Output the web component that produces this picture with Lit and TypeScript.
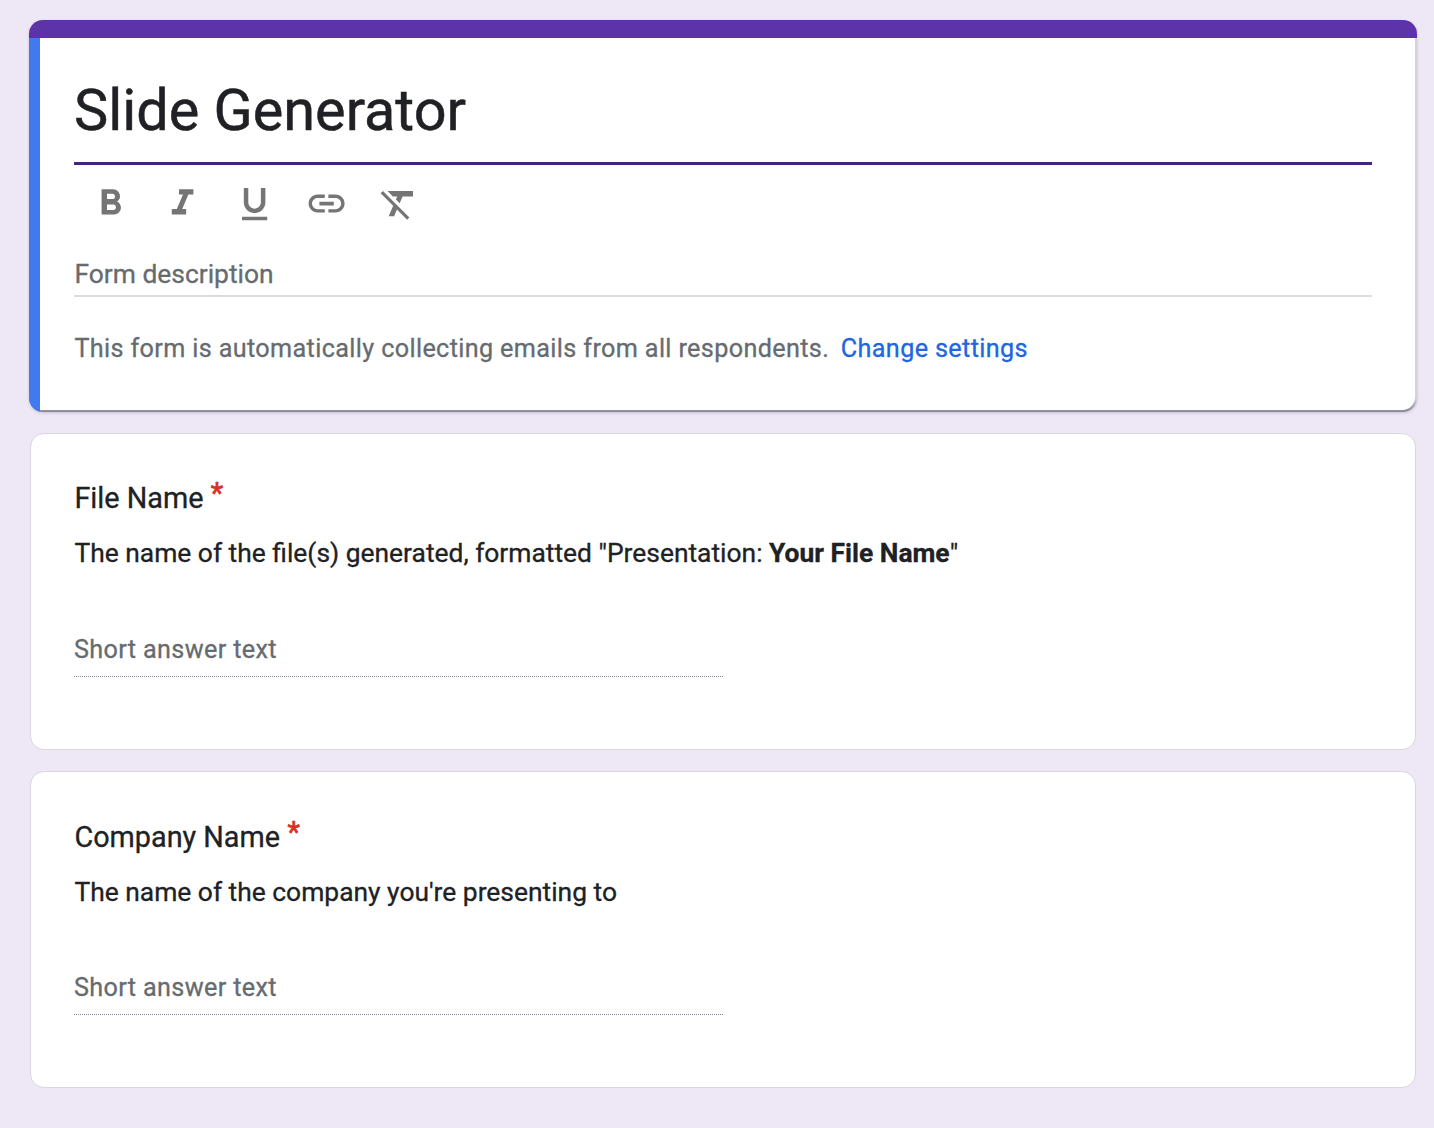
import { LitElement, html, css, svg } from "lit";
import { customElement, property } from "lit/decorators.js";

const ICONS: [string, string][] = [
  ["Bold", "M15.6 10.79c.97-.67 1.65-1.77 1.65-2.79 0-2.26-1.75-4-4-4H7v14h7.04c2.09 0 3.71-1.7 3.71-3.79 0-1.52-.86-2.82-2.15-3.42zM10 6.5h3c.83 0 1.5.67 1.5 1.5s-.67 1.5-1.5 1.5h-3v-3zm3.5 9H10v-3h3.5c.83 0 1.5.67 1.5 1.5s-.67 1.5-1.5 1.5z"],
  ["Italic", "M10 4v3h2.21l-3.42 8H6v3h8v-3h-2.21l3.42-8H18V4z"],
  ["Underline", "M12 17.3c3.31 0 6-2.69 6-6V3.3h-2.5v8c0 1.93-1.57 3.5-3.5 3.5s-3.5-1.57-3.5-3.5v-8H6v8c0 3.31 2.69 6 6 6zm-7 2v2h14v-2H5z"],
  ["Insert link", "M3.9 12c0-1.71 1.39-3.1 3.1-3.1h4V7H7c-2.76 0-5 2.24-5 5s2.24 5 5 5h4v-1.9H7c-1.71 0-3.1-1.39-3.1-3.1zM8 13h8v-2H8v2zm9-6h-4v1.9h4c1.71 0 3.1 1.39 3.1 3.1s-1.39 3.1-3.1 3.1h-4V17h4c2.76 0 5-2.24 5-5s-2.24-5-5-5z"],
  ["Remove formatting", "M3.27 5L2 6.27l6.97 6.97L6.5 19h3l1.57-3.66L16.73 21 18 19.73 3.55 5.27 3.27 5zM6 5v.18L8.82 8h2.4l-.72 1.68 2.1 2.1L14.21 8H20V5H6z"],
];

@customElement("form-header")
class FormHeader extends LitElement {
  static styles = css`
    :host {
      display: block;
    }
    .card {
      display: flex;
      flex-direction: column;
      height: 392px;
      border-radius: 14px;
      overflow: hidden;
      background: #dadce0;
    }
    .shell {
      border-radius: 14px;
      box-shadow: 0 1px 3px rgba(60, 50, 90, 0.2);
    }
    .strip {
      height: 18px;
      flex: none;
      background: #5c33a8;
    }
    .row {
      display: flex;
      flex: 1;
      background: linear-gradient(to bottom, #d5d2dc 0, #d5d2dc 360px, #8b8893 374px);
    }
    .accent {
      width: 11px;
      flex: none;
      background: #4179ee;
    }
    .body {
      flex: 1;
      min-width: 0;
      box-sizing: border-box;
      margin: 0 2px 2px 0;
      padding: 35px 43px 0 34px;
      background: #fff;
      border-bottom-right-radius: 13px;
    }
    .title {
      margin: 0;
      box-sizing: border-box;
      height: 92px;
      padding-top: 2px;
      line-height: 72px;
      font-size: 57.6px;
      font-weight: 400;
      color: #202124;
      -webkit-text-stroke: 0.5px #202124;
      border-bottom: 3px solid #42257e;
      white-space: nowrap;
    }
    .tools {
      display: flex;
      gap: 28.8px;
      padding: 17px 0 0 15px;
    }
    .icon {
      display: block;
      width: 43.2px;
      height: 43.2px;
      fill: #757575;
    }
    .desc {
      margin-top: 30px;
      height: 40px;
      line-height: 38px;
      font-size: 26.4px;
      text-indent: 0.4px;
      color: #666b70;
      -webkit-text-stroke: 0.3px #666b70;
      border-bottom: 2px solid #dadce0;
    }
    .note {
      margin-top: 33px;
      line-height: 38px;
      font-size: 25.2px;
      letter-spacing: 0.36px;
      text-indent: 0.4px;
      color: #666b70;
      -webkit-text-stroke: 0.3px #666b70;
      white-space: nowrap;
    }
    .link {
      margin-left: 5px;
      color: #2065e2;
      -webkit-text-stroke: 0.3px #2065e2;
    }
  `;
  render() {
    return html`<div class="shell"><section class="card">
      <div class="strip"></div>
      <div class="row">
        <div class="accent"></div>
        <div class="body">
          <h1 class="title">Slide Generator</h1>
          <div class="tools">
            ${ICONS.map(([name, d]) => html`<svg class="icon" viewBox="0 0 24 24" aria-label=${name}>${svg`<path d=${d}></path>`}</svg>`)}
          </div>
          <div class="desc">Form description</div>
          <div class="note">This form is automatically collecting emails from all respondents. <span class="link">Change settings</span></div>
        </div>
      </div>
    </section></div>`;
  }
}

@customElement("form-question")
class FormQuestion extends LitElement {
  static styles = css`
    :host {
      display: block;
    }
    .card {
      display: flex;
      flex-direction: column;
      box-sizing: border-box;
      height: 317px;
      padding: var(--question-inset, 43px) 43px 72px;
      background: #fff;
      border: 1px solid #d9d6e0;
      border-radius: 14px;
    }
    .name {
      display: flex;
      gap: 7px;
      line-height: 43px;
      font-size: 28.8px;
      text-indent: 0.4px;
      color: #202124;
      -webkit-text-stroke: 0.3px #202124;
    }
    .star {
      color: #d93025;
      line-height: 32px;
      -webkit-text-stroke: 0.7px #d93025;
    }
    .help {
      margin-top: 14px;
      line-height: 38px;
      font-size: 26.4px;
      text-indent: 0.4px;
      color: #202124;
      -webkit-text-stroke: 0.3px #202124;
      white-space: nowrap;
    }
    .answer {
      box-sizing: border-box;
      width: 649px;
      height: 46px;
      margin-top: auto;
      line-height: 38px;
      font-size: 25.2px;
      letter-spacing: 0.36px;
      color: #666b70;
      -webkit-text-stroke: 0.3px #666b70;
      border-bottom: 1px dotted #80868b;
    }
  `;
  @property() name = "";
  render() {
    return html`<section class="card">
      <div class="name"><span>${this.name}</span><span class="star">*</span></div>
      <div class="help"><slot></slot></div>
      <div class="answer">Short answer text</div>
    </section>`;
  }
}

@customElement("app-root")
class AppRoot extends LitElement {
  static styles = css`
    :host {
      display: block;
      box-sizing: border-box;
      min-height: 1128px;
      background: #ede7f6;
      font-family: Roboto, "Liberation Sans", sans-serif;
    }
    .page {
      display: flex;
      flex-direction: column;
      gap: 21px;
      padding: 20px 18px 40px 30px;
    }
    .head {
      margin: 0 -1px;
    }
    .last {
      --question-inset: 44px;
    }
  `;
  render() {
    return html`<main class="page">
      <form-header class="head"></form-header>
      <form-question name="File Name">The name of the file(s) generated, formatted "Presentation: <b>Your File Name</b>"</form-question>
      <form-question class="last" name="Company Name">The name of the company you're presenting to</form-question>
    </main>`;
  }
}
